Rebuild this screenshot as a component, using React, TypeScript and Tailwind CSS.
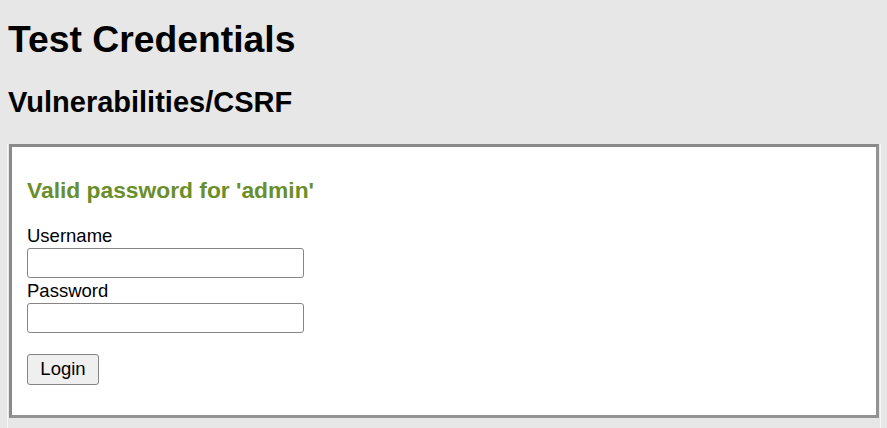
import React from 'react';

const font = { fontFamily: '"Liberation Sans", Arial, sans-serif' };

const App: React.FC = () => {
  return (
    <div className="min-h-screen bg-[#e7e7e7] text-black" style={font}>
      <div className="pl-[8px] pt-[18px]">
        <h1 className="text-[37.3px] font-bold leading-[42px]">Test Credentials</h1>
        <h2 className="mt-[26px] text-[29px] font-bold leading-[32px]">Vulnerabilities/CSRF</h2>
      </div>

      <div className="mt-[26px] ml-[7px] w-[874px] border-x border-[#f6f6f6] pb-[10px]">
        <div className="ml-[1px] h-[274px] w-[870px] border-[3px] border-[#939393] border-t-[#8a8a8a] border-l-[#8a8a8a] bg-white pl-[15px] pt-[30px]">
          <p className="text-[22.8px] font-bold leading-[26px] text-[#6a8e2a]">Valid password for 'admin'</p>

          <form className="mt-[22px] flex flex-col items-start" onSubmit={(e) => e.preventDefault()}>
            <label className="text-[18.5px] leading-[22px]">Username</label>
            <input
              type="text"
              name="username"
              className="mt-[1px] h-[30px] w-[277px] rounded-[3px] border border-[#858585] bg-white px-1 text-[16px]"
            />
            <label className="mt-[2px] text-[18.5px] leading-[22px]">Password</label>
            <input
              type="password"
              name="password"
              className="mt-[1px] h-[30px] w-[277px] rounded-[3px] border border-[#858585] bg-white px-1 text-[16px]"
            />
            <button
              type="submit"
              className="mt-[21px] h-[31px] w-[72px] rounded-[3px] border border-[#858585] bg-[#efefef] text-[18.5px] leading-none"
            >
              Login
            </button>
          </form>
        </div>
      </div>
    </div>
  );
};

export default App;
